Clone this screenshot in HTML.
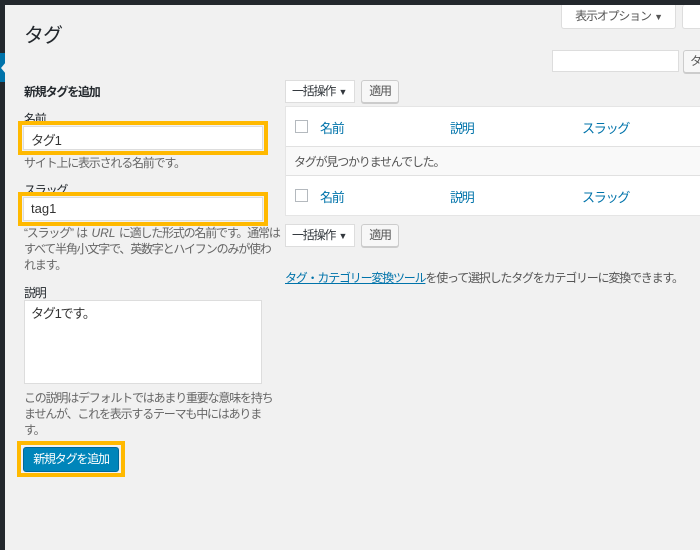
<!DOCTYPE html>
<html><head><meta charset="utf-8"><style>
*{box-sizing:border-box;margin:0;padding:0}
body{width:700px;height:550px;overflow:hidden;background:#f1f1f1;font-family:"Liberation Sans","Noto Sans CJK JP",sans-serif;font-size:12px;color:#444;position:relative;letter-spacing:-1.2px}
.a{position:absolute;white-space:nowrap}
.box{position:absolute;background:#fff;border:1px solid #ddd}
.yl{position:absolute;border:4px solid #ffb900}
.btn{position:absolute;background:#f7f7f7;border:1px solid #ccc;border-radius:3px;box-shadow:0 1px 0 #ccc;font-size:12px;text-align:center;color:#555}
.lnk{color:#0073aa}
.cb{position:absolute;width:13px;height:13px;border:1px solid #b4b9be;background:#fff}
.l0{letter-spacing:0}
</style></head><body>
<div class="a" style="left:0;top:0;width:700px;height:5px;background:#23282d"></div>
<div class="a" style="left:0;top:0;width:5px;height:550px;background:#23282d"></div>
<div class="a" style="left:0;top:53px;width:5px;height:29px;background:#0073aa"></div>
<div class="a" style="left:1px;top:62px;width:0;height:0;border-top:6px solid transparent;border-bottom:6px solid transparent;border-right:5px solid #f1f1f1"></div>

<div class="a" style="left:24px;top:19px;font-size:20px;color:#23282d;letter-spacing:-1px">タグ</div>
<div class="a" style="left:24px;top:83px;font-weight:bold;color:#23282d">新規タグを追加</div>
<div class="a" style="left:24px;top:110px;color:#23282d">名前</div>
<div class="yl" style="left:18px;top:121px;width:250px;height:34px"></div>
<div class="box" style="left:23px;top:126px;width:240px;height:24px;font-size:13px;padding:3px 7px;color:#333">タグ1</div>
<div class="a" style="left:24px;top:154px;color:#666">サイト上に表示される名前です。</div>
<div class="a" style="left:24px;top:181px;color:#23282d">スラッグ</div>
<div class="yl" style="left:18px;top:192px;width:250px;height:34px"></div>
<div class="box" style="left:23px;top:197px;width:240px;height:24px;font-size:13px;padding:3px 7px;color:#333;letter-spacing:0">tag1</div>
<div class="a" style="left:24px;top:225px;color:#666;line-height:16px;white-space:normal;width:256px">“スラッグ”<span class="l0"> は <i>URL</i> </span>に適した形式の名前です。通常はすべて半角小文字で、英数字とハイフンのみが使われます。</div>
<div class="a" style="left:24px;top:284px;color:#23282d">説明</div>
<div class="box" style="left:24px;top:300px;width:238px;height:84px;font-size:13px;padding:2px 6px;color:#333">タグ1です。</div>
<div class="a" style="left:24px;top:390px;color:#666;line-height:16px;white-space:normal;width:256px">この説明はデフォルトではあまり重要な意味を持ちませんが、これを表示するテーマも中にはあります。</div>
<div class="yl" style="left:17px;top:441px;width:108px;height:36px"></div>
<div class="a" style="left:23px;top:447px;width:96px;height:25px;background:#0085ba;border:1px solid #006799;border-radius:3px;color:#fff;text-align:center;line-height:23px">新規タグを追加</div>

<div class="btn" style="left:561px;top:5px;width:115px;height:24px;line-height:23px;background:#fff;border-color:#ddd;border-top:0;border-radius:0 0 3px 3px;box-shadow:none">表示オプション<span class="l0"> </span><span style="font-size:9px">▼</span></div>
<div class="btn" style="left:682px;top:5px;width:30px;height:24px;background:#fff;border-color:#ddd;border-top:0;box-shadow:none"></div>
<div class="box" style="left:552px;top:50px;width:127px;height:22px"></div>
<div class="btn" style="left:683px;top:50px;width:30px;height:23px;line-height:21px;text-align:left;padding-left:6px">タ</div>

<div class="box" style="left:285px;top:80px;width:70px;height:23px;line-height:21px;padding-left:6px;color:#32373c">一括操作<span class="l0"> </span><span style="font-size:9px">▼</span></div>
<div class="btn" style="left:361px;top:80px;width:38px;height:23px;line-height:21px">適用</div>

<div class="box" style="left:285px;top:106px;width:420px;height:110px;border-color:#e5e5e5"></div>
<div class="a" style="left:286px;top:146px;width:414px;height:30px;background:#f9f9f9;border-top:1px solid #e1e1e1;border-bottom:1px solid #e1e1e1"></div>
<div class="cb" style="left:295px;top:120px"></div>
<div class="a lnk" style="left:320px;top:118px;font-size:13px">名前</div>
<div class="a lnk" style="left:450px;top:118px;font-size:13px">説明</div>
<div class="a lnk" style="left:582px;top:118px;font-size:13px">スラッグ</div>
<div class="a" style="left:294px;top:153px;color:#555">タグが見つかりませんでした。</div>
<div class="cb" style="left:295px;top:189px"></div>
<div class="a lnk" style="left:320px;top:187px;font-size:13px">名前</div>
<div class="a lnk" style="left:450px;top:187px;font-size:13px">説明</div>
<div class="a lnk" style="left:582px;top:187px;font-size:13px">スラッグ</div>

<div class="box" style="left:285px;top:224px;width:70px;height:23px;line-height:21px;padding-left:6px;color:#32373c">一括操作<span class="l0"> </span><span style="font-size:9px">▼</span></div>
<div class="btn" style="left:361px;top:224px;width:38px;height:23px;line-height:21px">適用</div>

<div class="a" style="left:285px;top:269px;color:#555"><span class="lnk" style="text-decoration:underline">タグ・カテゴリー変換ツール</span>を使って選択したタグをカテゴリーに変換できます。</div>
</body></html>
